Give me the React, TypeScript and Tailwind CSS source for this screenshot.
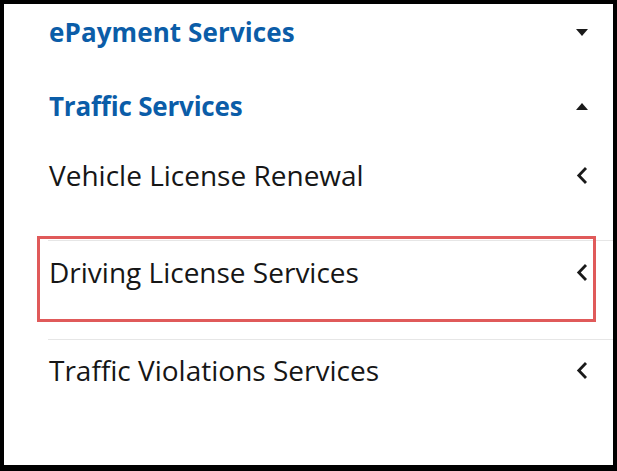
import React from "react";

const Caret = ({ up }: { up?: boolean }) => (
  <svg width="12" height="7" viewBox="0 0 12 7" className="block">
    {up ? <path d="M0 7 L6 0 L12 7 Z" fill="#1a1a1a" /> : <path d="M0 0 L12 0 L6 7 Z" fill="#1a1a1a" />}
  </svg>
);

const Chevron = () => (
  <svg width="12" height="19" viewBox="0 0 12 19" className="block">
    <path d="M10 2 L2.8 9.5 L10 17" fill="none" stroke="#1a1a1a" strokeWidth="2.8" />
  </svg>
);

export default function App() {
  const font = { fontFamily: '"Open Sans", "Noto Sans", sans-serif' };
  return (
    <div className="w-[617px] h-[471px] bg-black pt-[4px] pl-[4px] pr-[4px] pb-[6px]" style={font}>
      <div className="relative w-[609px] h-[461px] bg-white overflow-hidden">
        <div className="h-[56px] flex items-center justify-between pl-[45px] pr-[25px]">
          <span className="text-[26px] font-bold text-[#0b5da8] tracking-[0.1px]">ePayment Services</span>
          <Caret />
        </div>
        <div className="h-[92px] flex items-center justify-between pl-[45px] pr-[25px]">
          <span className="text-[26px] font-bold text-[#0b5da8] tracking-[-0.2px]">Traffic Services</span>
          <Caret up />
        </div>
        <div className="h-[46px] flex items-center justify-between pl-[45px] pr-[25px]">
          <span className="text-[28px] text-[#161616]">Vehicle License Renewal</span>
          <Chevron />
        </div>
        <div className="h-[42px]" />
        <div className="ml-[44px] border-t border-[#e6e6e6]">
          <div className="h-[62px] flex items-center justify-between pl-[1px] pr-[25px]">
            <span className="text-[28px] text-[#161616]">Driving License Services</span>
            <Chevron />
          </div>
          <div className="h-[36px]" />
        </div>
        <div className="ml-[44px] border-t border-[#e6e6e6]">
          <div className="h-[60px] flex items-center justify-between pl-[1px] pr-[25px]">
            <span className="text-[28px] text-[#161616]">Traffic Violations Services</span>
            <Chevron />
          </div>
        </div>
        <div className="absolute left-[33px] top-[232px] w-[559px] h-[86px] border-[3px] border-[#e05a5a]" />
      </div>
    </div>
  );
}
